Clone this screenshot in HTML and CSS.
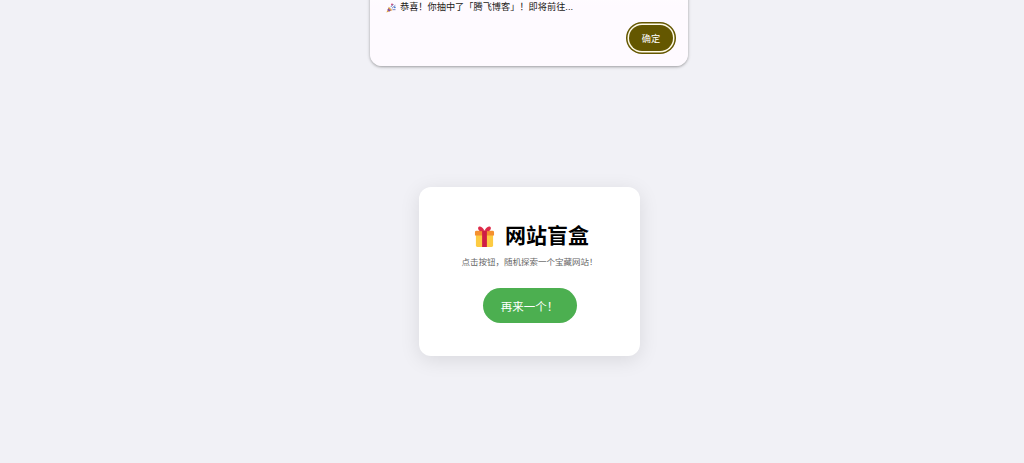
FILE: index.html
```html
<!DOCTYPE html>
<html lang="zh-CN">

<head>
    <meta charset="UTF-8">
    <meta name="viewport" content="width=device-width, initial-scale=1.0">
    <title>网站盲盒</title>
    <link rel="stylesheet" href="styles.css">
</head>

<body>
    <!-- 提示对话框 -->
    <div class="dialog">
        <p class="dialog-msg">
            <svg class="party-icon" viewBox="0 0 12 12" aria-hidden="true">
                <path d="M.5 11.500 3.400 4.400 7.600 8.600Z" fill="#e3a544" />
                <path d="M1.800 8.400 2.700 6.300 5.700 9.300 3.600 10.200Z" fill="#7d4bb0" />
                <circle cx="7.200" cy="1.800" r="1.100" fill="#d9386a" />
                <circle cx="10.600" cy="5.200" r="1.100" fill="#3f7fd6" />
                <path d="M5.600 5 9 1.200M7 6.400 11.200 2.800M7.800 8 11.400 8" stroke="#5c6fb0" stroke-width="1" fill="none" />
            </svg>
            <span>恭喜！你抽中了「腾飞博客」！即将前往...</span>
        </p>
        <div class="dialog-actions">
            <button class="confirm-btn">确定</button>
        </div>
    </div>

    <!-- 盲盒卡片 -->
    <div class="card">
        <h1 class="card-title">
            <svg class="gift-icon" viewBox="0 0 22 22" aria-hidden="true">
                <path d="M2 8h18v12.500a1.500 1.500 0 0 1-1.500 1.500h-15a1.500 1.500 0 0 1-1.500-1.500Z" fill="#fdcb42" />
                <path d="M1 6.500a1.500 1.500 0 0 1 1.500-1.500h17a1.500 1.500 0 0 1 1.500 1.500v3.500h-20Z" fill="#f4902f" />
                <path d="M8.500 5h5v17h-5Z" fill="#cf1d45" />
                <path d="M11 5C9 1 6.500 0 5 .8 3.500 1.800 4.500 5 7 5.500ZM11 5c2-4 4.500-5 6-4.200 1.500 1 .5 4.200-2 4.700Z" fill="#dd2c4a" />
            </svg>
            <span>网站盲盒</span>
        </h1>
        <p class="card-desc">点击按钮，随机探索一个宝藏网站！</p>
        <button class="draw-btn">再来一个！</button>
    </div>
</body>

</html>
```

FILE: styles.css
```css
/* 基本样式和布局 */
html,
body {
    height: 100%;
}

body {
    font-family: "Liberation Sans", "Noto Sans CJK SC", sans-serif;
    background-color: #f1f1f6;
    margin: 0;
    padding: 80px 0 0 35px;
    box-sizing: border-box;
    display: flex;
    align-items: center;
    justify-content: center;
    overflow: hidden;
}

/* 提示对话框 */
.dialog {
    position: absolute;
    top: -20px;
    left: 370px;
    width: 318px;
    height: 86px;
    box-sizing: border-box;
    padding: 20px 12px 0 16px;
    background: linear-gradient(#ffffff, #fefaff 30%);
    border-radius: 12px;
    box-shadow: 0 1px 2px rgba(0, 0, 0, 0.2), 0 1px 3px 1px rgba(0, 0, 0, 0.12);
}

.dialog-msg {
    display: flex;
    align-items: center;
    margin: 0;
    height: 15px;
    font-size: 9.200px;
    line-height: 15px;
    color: #1d1b20;
}

.party-icon {
    width: 10px;
    height: 10px;
    margin-right: 4px;
}

.dialog-actions {
    display: flex;
    justify-content: flex-end;
    margin-top: 7px;
}

.confirm-btn {
    width: 44px;
    height: 26px;
    margin: 3px;
    padding: 0;
    border: 0;
    border-radius: 13px;
    background-color: #645700;
    color: #ffffff;
    font-family: inherit;
    font-size: 9.200px;
    box-shadow: 0 0 0 1.500px #fffbe8, 0 0 0 3px #645700;
}

/* 盲盒卡片 */
.card {
    width: 221px;
    height: 169px;
    box-sizing: border-box;
    padding-top: 34px;
    background-color: #ffffff;
    border-radius: 12px;
    box-shadow: 0 4px 20px rgba(0, 0, 0, 0.1);
    text-align: center;
}

.card-title {
    display: flex;
    align-items: center;
    justify-content: center;
    gap: 10px;
    margin: 0;
    padding-left: 4px;
    height: 30px;
    font-size: 21px;
    line-height: 30px;
    font-weight: 700;
    color: #000000;
}

.gift-icon {
    width: 21px;
    height: 21px;
}

.card-desc {
    margin: 3px 0 0;
    font-size: 8.500px;
    line-height: 16px;
    color: #666666;
}

.draw-btn {
    display: block;
    width: 94px;
    height: 35px;
    margin: 18px auto 0;
    padding: 0;
    border: 0;
    border-radius: 18px;
    background-color: #4caf50;
    color: #ffffff;
    font-family: inherit;
    font-size: 11.500px;
}
```
